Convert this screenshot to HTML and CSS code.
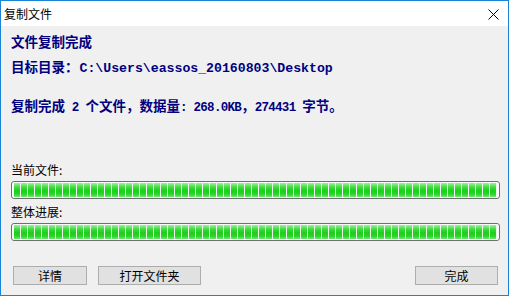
FILE: index.html
```html
<!DOCTYPE html>
<html>
<head>
<meta charset="utf-8">
<link rel="stylesheet" href="styles.css">
</head>
<body>
<div class="window">
  <div class="titlebar">
    <span class="title">复制文件</span>
    <svg class="close" width="11" height="11" viewBox="0 0 11 11"><path d="M0.5 0.5 L10.5 10.5 M10.5 0.5 L0.5 10.5" stroke="#000" stroke-width="1" fill="none"/></svg>
  </div>
  <div class="content">
    <div class="line l1">文件复制完成</div>
    <div class="line l2">目标目录：<span class="m1">C:\Users\eassos_20160803\Desktop</span></div>
    <div class="line l3">复制完成<span class="m2"> 2 </span>个文件，数据量<span class="m2">: 268.0KB</span>，<span class="m2">274431 </span>字节。</div>
    <div class="label lab1">当前文件:</div>
    <div class="bar"><div class="fill"></div></div>
    <div class="label lab2">整体进展:</div>
    <div class="bar"><div class="fill"></div></div>
    <div class="buttons">
      <button class="btn b1">详情</button>
      <button class="btn b2">打开文件夹</button>
      <span class="spacer"></span>
      <button class="btn b3">完成</button>
    </div>
  </div>
</div>
</body>
</html>
```
FILE: styles.css
```css
html, body {
  margin: 0;
  padding: 0;
  width: 509px;
  height: 296px;
  overflow: hidden;
}
.window {
  width: 509px;
  height: 296px;
  box-sizing: border-box;
  border: 1px solid #1883d7;
  background: #f0f0f0;
  display: flex;
  flex-direction: column;
  font-family: "Noto Sans CJK SC", sans-serif;
}
.titlebar {
  height: 25px;
  background: #fff;
  display: flex;
  align-items: center;
  padding: 0 9px 0 3px;
  flex: none;
}
.title {
  font-size: 12px;
  color: #000;
  line-height: 16px;
  flex: 1;
}
.close {
  display: block;
  margin-top: 2px;
}
.content {
  padding: 5px 10px 0 9px;
  display: flex;
  flex-direction: column;
}
.line {
  color: #000080;
  font-weight: bold;
  font-size: 13.5px;
  line-height: 20px;
  height: 20px;
  white-space: nowrap;
  padding-left: 1px;
}
.l2 { margin-top: 5px; }
.l3 { margin-top: 19px; }
.m1 {
  font-family: "Liberation Mono", monospace;
  font-size: 13.2px;
  margin-left: 1px;
}
.m2 {
  font-family: "Liberation Mono", monospace;
  font-size: 12.5px;
  letter-spacing: -0.7px;
  white-space: pre;
}
.label {
  font-size: 12px;
  line-height: 20px;
  height: 20px;
  color: #000;
  padding-left: 1px;
}
.lab1 { margin-top: 45px; }
.lab2 { margin-top: 3px; }
.bar {
  margin-top: 1px;
  height: 18px;
  box-sizing: border-box;
  border: 1px solid #6f6f6f;
  border-radius: 3px;
  padding: 1px 2px 1px 2px;
  background: #fafafa;
  width: 489px;
  margin-left: 1px;
}
.fill {
  height: 100%;
  background:
    repeating-linear-gradient(90deg, transparent 0 6px, #eaf5ea 6px 7px),
    linear-gradient(to bottom, #9df09d 0%, #3fdc3f 30%, #1ccf1c 55%, #2bd42b 80%, #6fe56f 100%);
}
.buttons {
  display: flex;
  margin-top: 25px;
  padding-left: 3px;
}
.btn {
  height: 19px;
  box-sizing: border-box;
  border: 1px solid #adadad;
  background: #e1e1e1;
  font-family: "Noto Sans CJK SC", sans-serif;
  font-size: 12px;
  line-height: 15px;
  padding: 0;
  color: #000;
}
.b1 { width: 74px; }
.b2 { width: 103px; margin-left: 11px; }
.spacer { flex: 1; }
.b3 { width: 83px; margin-right: 0; }
```
